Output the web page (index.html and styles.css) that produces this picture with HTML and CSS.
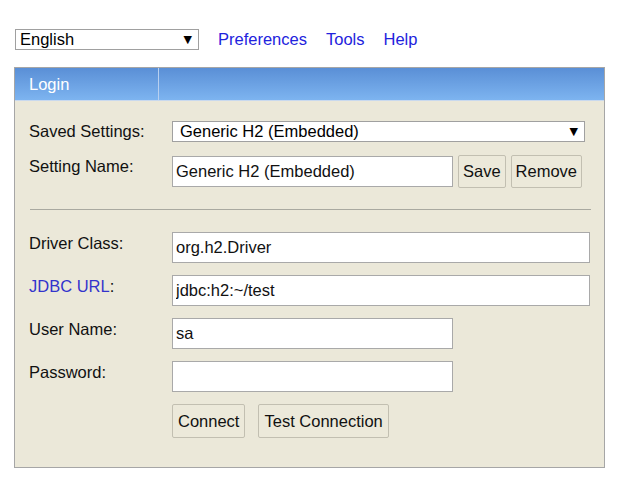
FILE: index.html
```html
<!DOCTYPE html>
<html lang="en">
<head>
  <meta charset="UTF-8">
  <title>H2 Console</title>
  <link rel="stylesheet" href="styles.css">
</head>
<body>
  <div class="topbar">
    <div class="select lang-select"><span>English</span><span class="arrow">▼</span></div>
    <a href="#">Preferences</a>
    <a href="#">Tools</a>
    <a href="#">Help</a>
  </div>

  <div class="panel">
    <div class="panel-head">
      <div class="tab">Login</div>
    </div>
    <div class="panel-body">
      <div class="row row-select">
        <div class="label">Saved Settings:</div>
        <div class="select settings-select"><span>Generic H2 (Embedded)</span><span class="arrow">▼</span></div>
      </div>
      <div class="row row-name">
        <div class="label">Setting Name:</div>
        <div class="field">
          <input class="input short" type="text" value="Generic H2 (Embedded)">
          <button>Save</button>
          <button>Remove</button>
        </div>
      </div>

      <hr>

      <div class="row">
        <div class="label">Driver Class:</div>
        <input class="input wide" type="text" value="org.h2.Driver">
      </div>
      <div class="row">
        <div class="label"><a href="#">JDBC URL</a>:</div>
        <input class="input wide" type="text" value="jdbc:h2:~/test">
      </div>
      <div class="row">
        <div class="label">User Name:</div>
        <input class="input short" type="text" value="sa">
      </div>
      <div class="row">
        <div class="label">Password:</div>
        <input class="input short" type="password" value="">
      </div>
      <div class="row">
        <div class="label"></div>
        <div class="field buttons">
          <button class="btn-big">Connect</button>
          <button class="btn-big">Test Connection</button>
        </div>
      </div>
    </div>
  </div>
</body>
</html>
```

FILE: styles.css
```css
body {
  margin: 0;
  padding: 29px 19px 0 14px;
  font-family: 'Liberation Sans', Arial, sans-serif;
  font-size: 16.5px;
  color: #111;
  background-color: #fff;
}
a {
  color: #2222dd;
  text-decoration: none;
}
.topbar {
  display: flex;
  align-items: center;
  gap: 19px;
  height: 21px;
  margin-left: 1px;
}
.select {
  position: relative;
  box-sizing: border-box;
  height: 21px;
  border: 1px solid #a0a0a0;
  background-color: #fff;
  line-height: 19px;
  color: #000;
}
.select .arrow {
  position: absolute;
  right: 6px;
  top: 0;
  font-size: 11px;
  font-family: 'DejaVu Sans', sans-serif;
}
.lang-select {
  width: 184px;
  padding-left: 4px;
}
.panel {
  margin-top: 17px;
  border: 1px solid #a6a6a6;
  background-color: #ebe8d9;
}
.panel-head {
  height: 32px;
  background: linear-gradient(#5a8fd6, #7db4f0);
  border-bottom: 1px solid #c9d9ee;
}
.tab {
  width: 144px;
  height: 32px;
  border-right: 1px solid #b8d0f0;
  color: #fff;
  line-height: 32px;
  padding-left: 14px;
  box-sizing: border-box;
}
.panel-body {
  padding: 20px 15px 29px 14px;
}
.row {
  display: grid;
  grid-template-columns: 143px 1fr;
  align-items: start;
  margin-bottom: 12px;
}
.row:last-child {
  margin-bottom: 0;
}
.label {
  padding-top: 2px;
  color: #111;
}
.label a {
  color: #3333cc;
}
.row-select {
  margin-bottom: 13px;
}
.row-select .label {
  padding-top: 1px;
}
.settings-select {
  width: 413px;
  padding-left: 7px;
}
.field {
  display: flex;
  align-items: center;
  gap: 5px;
}
.input {
  box-sizing: border-box;
  height: 31px;
  border: 1px solid #a9a9a9;
  background-color: #fff;
  padding: 0 3px;
  font-family: inherit;
  font-size: 16.5px;
  color: #111;
  margin: 0;
}
.input.short {
  width: 281px;
}
.input.wide {
  width: 418px;
}
.row-name .field {
  height: 33px;
}
hr {
  margin: 21px 0 22px 1px;
  width: 561px;
  border: none;
  border-top: 1px solid #a9a9a0;
  height: 0;
}
button {
  box-sizing: border-box;
  height: 33px;
  margin: 0;
  padding: 0 4px;
  font-family: inherit;
  font-size: 16.5px;
  color: #111;
  background-color: #ece9da;
  border: 1px solid #c2bfb1;
  border-radius: 2px;
}
.buttons {
  gap: 13px;
}
.btn-big {
  height: 34px;
  padding: 0 5px;
}
```
